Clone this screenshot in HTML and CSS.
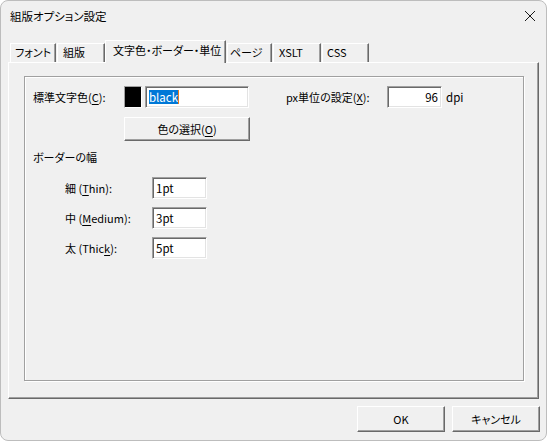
FILE: index.html
```html
<!DOCTYPE html>
<html lang="ja">
<head>
<meta charset="utf-8">
<title>組版オプション設定</title>
<link rel="stylesheet" href="styles.css">
</head>
<body>
<div class="window">
  <div class="titlebar">
    <span class="title">組版オプション設定</span>
    <svg class="close" width="12" height="12" viewBox="0 0 12 12"><path d="M1 1 L11 11 M11 1 L1 11" stroke="#1a1a1a" stroke-width="1" fill="none"/></svg>
  </div>
  <div class="tabs">
    <div class="tab t-font">フォント</div>
    <div class="tab t-kumi">組版</div>
    <div class="tab tab-active t-color">文字色・ボーダー・単位</div>
    <div class="tab t-page">ページ</div>
    <div class="tab t-xslt">XSLT</div>
    <div class="tab t-css">CSS</div>
  </div>
  <div class="panel">
    <div class="group">
      <div class="row-color">
        <span class="lbl lbl-color">標準文字色(<u>C</u>):</span>
        <span class="swatch"></span>
        <span class="field field-color"><span class="sel">black</span><span class="caret"></span></span>
        <span class="lbl lbl-px">px単位の設定(<u>X</u>):</span>
        <span class="field field-dpi">96</span>
        <span class="unit">dpi</span>
      </div>
      <div class="row-pick">
        <span class="btn btn-pick">色の選択(<u>O</u>)</span>
      </div>
      <div class="heading">ボーダーの幅</div>
      <div class="border-rows">
        <div class="brow"><span class="lbl lbl-b">細 (<u>T</u>hin):</span><span class="field field-b">1pt</span></div>
        <div class="brow"><span class="lbl lbl-b">中 (<u>M</u>edium):</span><span class="field field-b">3pt</span></div>
        <div class="brow"><span class="lbl lbl-b">太 (Thic<u>k</u>):</span><span class="field field-b">5pt</span></div>
      </div>
    </div>
  </div>
  <div class="buttons">
    <span class="btn btn-dlg">OK</span>
    <span class="btn btn-dlg">キャンセル</span>
  </div>
</div>
</body>
</html>
```

FILE: styles.css
```css
html { background: #ffffff; }
body {
  margin: 0;
  font-family: "Noto Sans CJK JP", "Noto Sans", sans-serif;
  font-size: 11px;
  font-feature-settings: "palt" 1;
  color: #000;
}
u { text-decoration: underline; text-underline-offset: 2px; }

.window {
  width: 547px;
  height: 441px;
  box-sizing: border-box;
  border: 1px solid #bdbdbd;
  border-radius: 8px;
  background: #f0f0f0;
  overflow: hidden;
  display: flex;
  flex-direction: column;
}

.titlebar {
  height: 31px;
  display: flex;
  align-items: center;
  justify-content: space-between;
  padding: 0 10px 0 9px;
  flex: none;
}
.title { line-height: 16px; margin-top: -1px; font-size: 11.5px; }
.close { display: block; margin-top: -1px; }

.tabs {
  display: flex;
  align-items: flex-end;
  height: 22px;
  margin-top: 8px;
  padding-left: 9px;
  flex: none;
  position: relative;
  z-index: 1;
}
.tab {
  box-sizing: border-box;
  height: 19px;
  border-top: 1px solid #ffffff;
  border-left: 1px solid #ffffff;
  border-right: 1px solid #696969;
  box-shadow: inset -1px 0 #a0a0a0;
  padding-left: 4px;
  line-height: 17px;
  margin-right: 1px;
  white-space: nowrap;
}
.tab-active {
  height: 23px;
  margin-bottom: -1px;
  background: #f0f0f0;
  padding-left: 7px;
  line-height: 19px;
  margin-left: -1px;
}
.t-font { width: 46px; }
.t-kumi { width: 48px; padding-left: 5px; }
.t-color { width: 121px; }
.t-page { width: 45px; padding-left: 2px; }
.t-xslt { width: 48px; padding-left: 5px; }
.t-css { width: 47px; padding-left: 4px; }

.panel {
  box-sizing: border-box;
  height: 337px;
  margin: 0 7px 0 7px;
  border-top: 1px solid #ffffff;
  border-left: 1px solid #ffffff;
  border-right: 1px solid #696969;
  border-bottom: 1px solid #696969;
  box-shadow: inset -1px -1px #a0a0a0;
  padding: 13px 0 0 15px;
  flex: none;
}

.group {
  box-sizing: border-box;
  width: 500px;
  height: 305px;
  border: 1px solid #a0a0a0;
  box-shadow: inset 1px 1px #ffffff, 1px 1px #ffffff;
  padding: 9px 0 0 8px;
}

.row-color {
  display: flex;
  align-items: center;
  height: 22px;
}
.lbl { line-height: 16px; white-space: nowrap; }
.lbl-color { width: 91px; }
.swatch {
  box-sizing: border-box;
  width: 18px;
  height: 22px;
  background: #000;
  border: 1px solid #a0a0a0;
  border-right-color: #ffffff;
  border-bottom-color: #ffffff;
  margin-right: 3px;
}
.field {
  box-sizing: border-box;
  height: 22px;
  background: #ffffff;
  border: 1px solid #a0a0a0;
  border-right-color: #ffffff;
  border-bottom-color: #ffffff;
  box-shadow: inset 1px 1px #696969, inset -1px -1px #e3e3e3;
  padding: 0 3px;
  display: flex;
  align-items: center;
  line-height: 16px;
  font-size: 11.5px;
}
.field-color { width: 104px; }
.sel {
  background: #0078d7;
  color: #ffffff;
  line-height: 14px;
}
.caret {
  width: 1px;
  height: 14px;
  background: #e87b1c;
}
.lbl-px { width: 101px; margin-left: 37px; }
.field-dpi { width: 55px; justify-content: flex-end; }
.unit { margin-left: 4px; line-height: 16px; font-size: 11.5px; }

.row-pick { display: flex; padding-left: 91px; margin-top: 9px; }
.btn {
  box-sizing: border-box;
  display: flex;
  align-items: center;
  justify-content: center;
  background: #f0f0f0;
  border-top: 1px solid #ffffff;
  border-left: 1px solid #ffffff;
  border-right: 1px solid #696969;
  border-bottom: 1px solid #696969;
  box-shadow: inset -1px -1px #a0a0a0;
  line-height: 16px;
  white-space: nowrap;
}
.btn-pick { width: 126px; height: 24px; }

.heading { line-height: 16px; margin-top: 8px; }

.border-rows {
  display: flex;
  flex-direction: column;
  gap: 8px;
  margin-top: 12px;
  padding-left: 32px;
}
.brow { display: flex; align-items: center; }
.lbl-b { width: 87px; }
.field-b { width: 55px; }

.buttons {
  display: flex;
  justify-content: flex-end;
  gap: 7px;
  margin-top: 7px;
  padding-right: 6px;
}
.btn-dlg { width: 88px; height: 26px; }
```
